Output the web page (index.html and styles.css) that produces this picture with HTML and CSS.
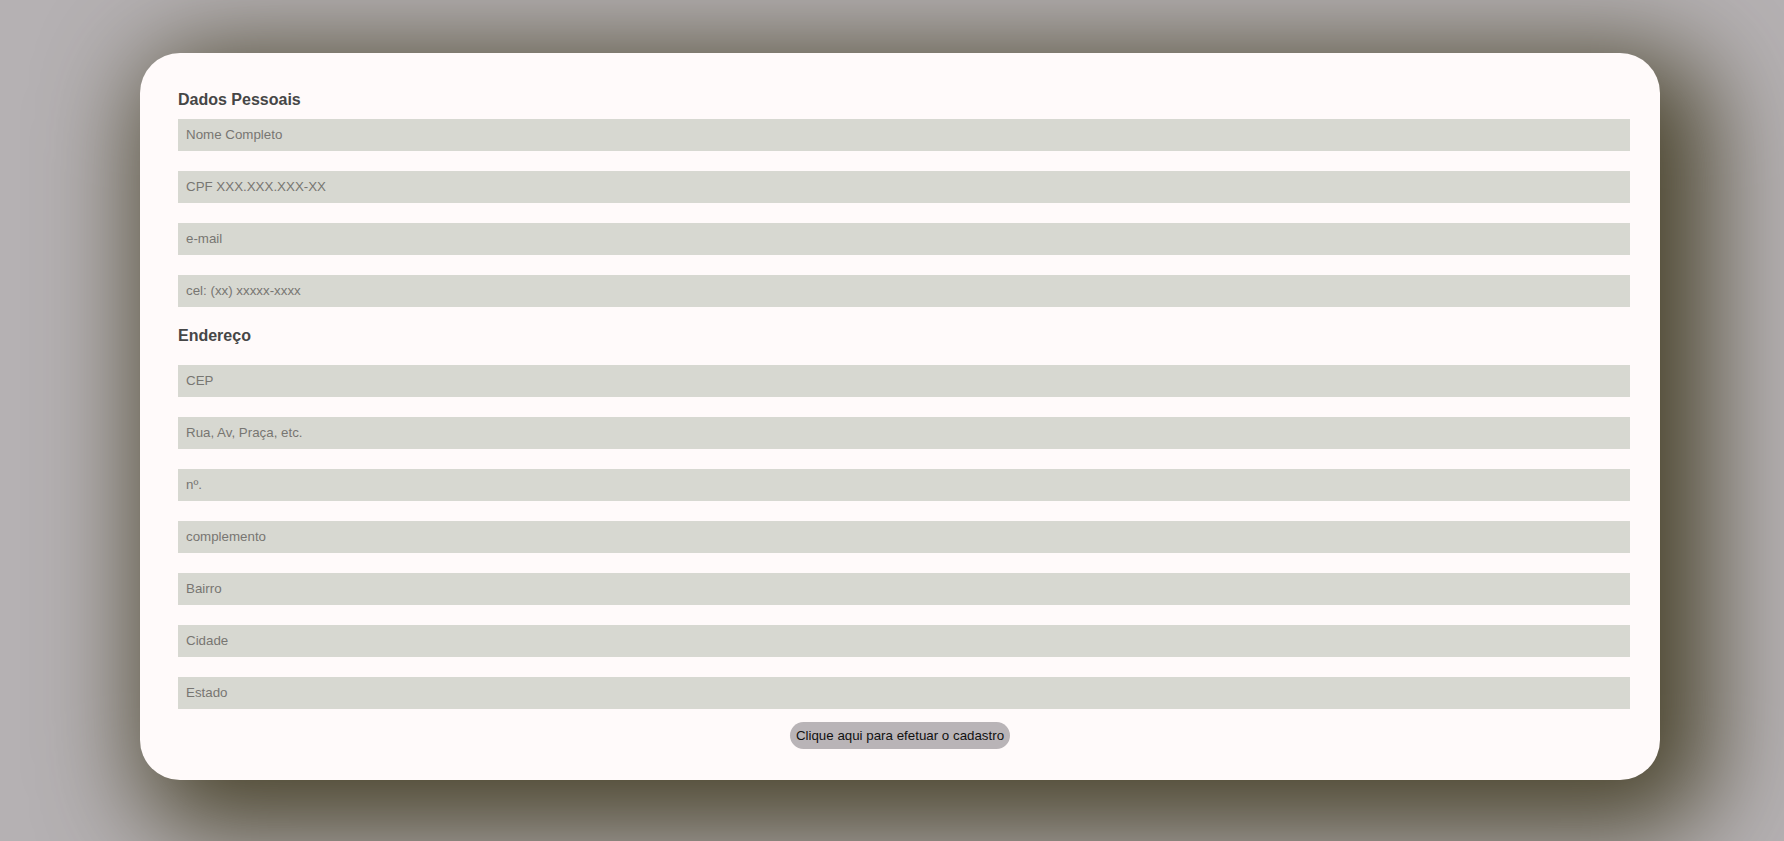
FILE: index.html
```html
<!DOCTYPE html>
<html lang="pt-BR">
<head>
<meta charset="utf-8">
<title>Cadastro</title>
<link rel="stylesheet" href="styles.css">
</head>
<body>
<main class="page">
  <form class="card">
    <h3 class="section-title first">Dados Pessoais</h3>
    <div class="fields">
      <input class="field" type="text" placeholder="Nome Completo">
      <input class="field" type="text" placeholder="CPF XXX.XXX.XXX-XX">
      <input class="field" type="text" placeholder="e-mail">
      <input class="field" type="text" placeholder="cel: (xx) xxxxx-xxxx">
    </div>
    <h3 class="section-title second">Endereço</h3>
    <div class="fields">
      <input class="field" type="text" placeholder="CEP">
      <input class="field" type="text" placeholder="Rua, Av, Praça, etc.">
      <input class="field" type="text" placeholder="nº.">
      <input class="field" type="text" placeholder="complemento">
      <input class="field" type="text" placeholder="Bairro">
      <input class="field" type="text" placeholder="Cidade">
      <input class="field" type="text" placeholder="Estado">
    </div>
    <div class="actions">
      <button class="submit" type="button">Clique aqui para efetuar o cadastro</button>
    </div>
  </form>
</main>
</body>
</html>
```

FILE: styles.css
```css
html, body {
  margin: 0;
  padding: 0;
}

body {
  background: #b5b1b3;
  font-family: "Liberation Sans", Arial, sans-serif;
  height: 841px;
  overflow: hidden;
}

.page {
  padding: 53px 124px 0 140px;
}

.card {
  box-sizing: border-box;
  width: 1520px;
  height: 727px;
  background: #fffafa;
  border-radius: 40px;
  padding: 38px 30px 30px 38px;
  box-shadow: 25px 25px 100px 25px #4b452e;
  display: flex;
  flex-direction: column;
}

.section-title {
  margin: 0;
  font-size: 16px;
  line-height: 18px;
  font-weight: bold;
  color: #464646;
}

.section-title.first {
  margin-bottom: 10px;
}

.section-title.second {
  margin-top: 20px;
  margin-bottom: 20px;
}

.fields {
  display: flex;
  flex-direction: column;
  gap: 20px;
}

.field {
  box-sizing: border-box;
  display: block;
  width: 100%;
  height: 32px;
  margin: 0;
  border: none;
  padding: 0 8px 2px;
  background: #d7d8d1;
  font-family: "Liberation Sans", Arial, sans-serif;
  font-size: 13.333px;
  color: #222;
  outline: none;
}

.field::placeholder {
  color: #777672;
}

.actions {
  display: flex;
  justify-content: center;
  margin: 13px -30px 0 -38px;
}

.submit {
  height: 27px;
  padding: 0 6px;
  border: none;
  border-radius: 14px;
  background: #b9b4b7;
  font-family: "Liberation Sans", Arial, sans-serif;
  font-size: 13.333px;
  color: #111;
  cursor: pointer;
}
```
